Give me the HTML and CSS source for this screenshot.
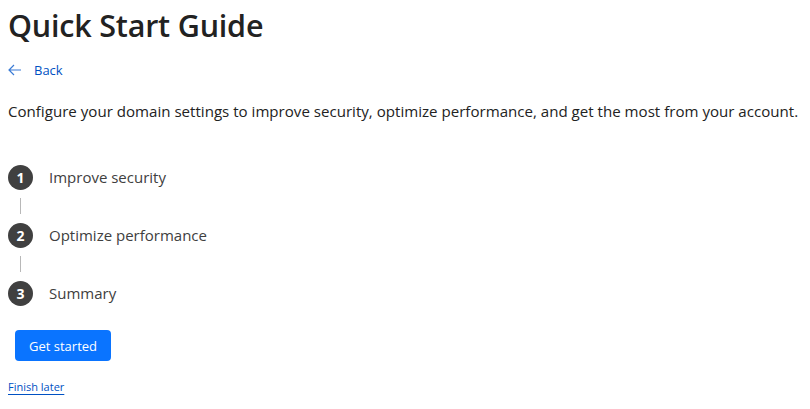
FILE: index.html
```html
<!DOCTYPE html>
<html>
<head>
<meta charset="utf-8">
<link rel="stylesheet" href="styles.css">
</head>
<body>
<main class="page">
  <h1 class="title">Quick Start Guide</h1>
  <a class="back" href="#">
    <svg class="back-icon" width="14" height="12" viewBox="0 0 14 12"><path d="M6 1 L1 6 L6 11 M1 6 H13" fill="none" stroke="#3a7bd5" stroke-width="1.2"/></svg>
    <span>Back</span>
  </a>
  <p class="desc">Configure your domain settings to improve security, optimize performance, and get the most from your account.</p>
  <ol class="steps">
    <li class="step"><span class="num">1</span><span class="label">Improve security</span></li>
    <li class="connector"></li>
    <li class="step"><span class="num">2</span><span class="label">Optimize performance</span></li>
    <li class="connector"></li>
    <li class="step"><span class="num">3</span><span class="label">Summary</span></li>
  </ol>
  <div class="actions"><button class="btn">Get started</button></div>
  <a class="finish" href="#">Finish later</a>
</main>
</body>
</html>
```
FILE: styles.css
```css
* { box-sizing: border-box; }
body { margin: 0; font-family: "Open Sans", "Noto Sans", sans-serif; color: #222; background: #fff; }
.page { padding: 0 8px; }
.title { margin: 0; padding-top: 4px; font-size: 30.5px; font-weight: 600; color: #222; line-height: 42px; letter-spacing: -0.2px; }
.back { display: flex; align-items: center; gap: 12px; margin-top: 15px; color: #0051c3; text-decoration: none; font-size: 13px; line-height: 18px; }
.back-icon { display: block; }
.desc { margin: 22px 0 0; font-size: 15.1px; line-height: 20px; color: #222; letter-spacing: 0; white-space: nowrap; }
.steps { list-style: none; margin: 43px 0 0; padding: 0; }
.step { display: flex; align-items: center; height: 26px; }
.num { width: 25px; height: 25px; border-radius: 50%; background: #404040; color: #fff; font-size: 14px; font-weight: 700; display: flex; align-items: center; justify-content: center; }
.label { margin-left: 16px; font-size: 15px; color: #404040; }
.connector { width: 1px; height: 16px; background: #b8b8b8; margin: 8px 0 8px 12px; }
.actions { margin-top: 24px; padding-left: 7px; }
.btn { font-family: inherit; background: #0a74ff; color: #fff; border: none; border-radius: 4px; height: 31px; padding: 0 14px; font-size: 13px; }
.finish { display: inline-block; margin-top: 18px; font-size: 11px; color: #0051c3; text-decoration: underline; text-underline-offset: 3px; }
```
